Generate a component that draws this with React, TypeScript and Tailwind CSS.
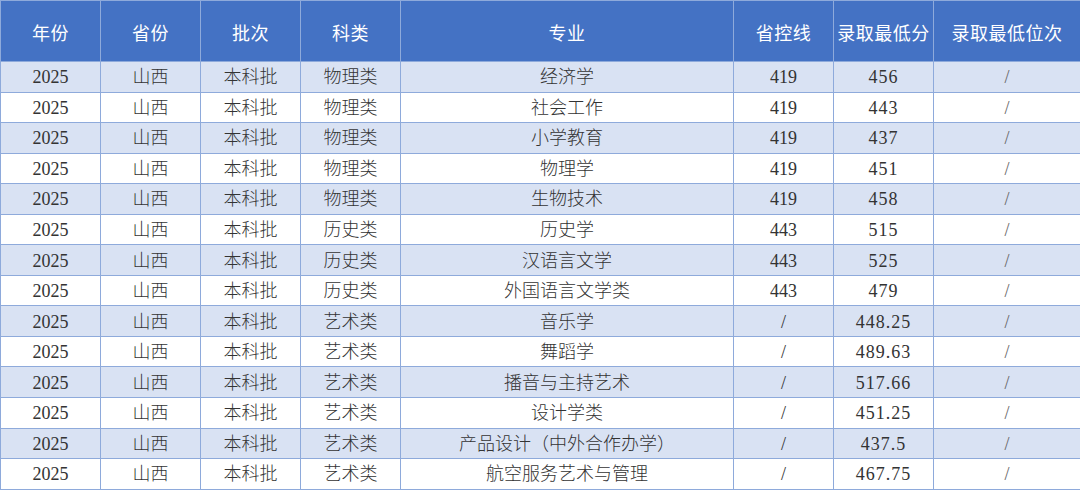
const HEADERS = ["年份", "省份", "批次", "科类", "专业", "省控线", "录取最低分", "录取最低位次"];
const WIDTHS = ["w-[100px]", "w-[100px]", "w-[100px]", "w-[100px]", "w-[333px]", "w-[100px]", "w-[100px]", "w-[147px]"];

type Row = [string, string, string, string];

// 科类, 专业, 省控线, 录取最低分
const ROWS: Row[] = [
  ["物理类", "经济学", "419", "456"],
  ["物理类", "社会工作", "419", "443"],
  ["物理类", "小学教育", "419", "437"],
  ["物理类", "物理学", "419", "451"],
  ["物理类", "生物技术", "419", "458"],
  ["历史类", "历史学", "443", "515"],
  ["历史类", "汉语言文学", "443", "525"],
  ["历史类", "外国语言文学类", "443", "479"],
  ["艺术类", "音乐学", "/", "448.25"],
  ["艺术类", "舞蹈学", "/", "489.63"],
  ["艺术类", "播音与主持艺术", "/", "517.66"],
  ["艺术类", "设计学类", "/", "451.25"],
  ["艺术类", "产品设计（中外合作办学）", "/", "437.5"],
  ["艺术类", "航空服务艺术与管理", "/", "467.75"],
];

const cell = "border border-[#8eaadb] text-center p-0";

export default function App() {
  return (
    <div className="w-[1080px] h-[491px] overflow-hidden bg-white">
      <table className="w-[1080px] table-fixed border-collapse">
        <colgroup>
          {WIDTHS.map((w, i) => (
            <col key={i} className={w} />
          ))}
        </colgroup>
        <thead>
          <tr className="h-[61px] bg-[#4472c4]">
            {HEADERS.map((h) => (
              <th
                key={h}
                className={`${cell} pt-[2px] font-normal text-white text-[18px] tracking-[0.5px] font-['Noto_Sans_CJK_SC',sans-serif]`}
              >
                {h}
              </th>
            ))}
          </tr>
        </thead>
        <tbody className="text-[18px] font-light text-[#333] font-['Liberation_Serif','Noto_Sans_CJK_SC',serif]">
          {ROWS.map(([kind, major, line, score], i) => (
            <tr key={i} className={`h-[30.55px] ${i % 2 === 0 ? "bg-[#d9e2f3]" : "bg-white"}`}>
              <td className={`${cell} pt-[2px]`}>2025</td>
              <td className={`${cell} pt-[2px]`}>山西</td>
              <td className={`${cell} pt-[2px]`}>本科批</td>
              <td className={`${cell} pt-[2px]`}>{kind}</td>
              <td className={`${cell} pt-[2px]`}>{major}</td>
              <td className={`${cell} pt-[2px]`}>{line}</td>
              <td className={`${cell} pt-[2px] tracking-[1px]`}>{score}</td>
              <td className={`${cell} pt-[2px] text-[#666]`}>/</td>
            </tr>
          ))}
        </tbody>
      </table>
    </div>
  );
}
